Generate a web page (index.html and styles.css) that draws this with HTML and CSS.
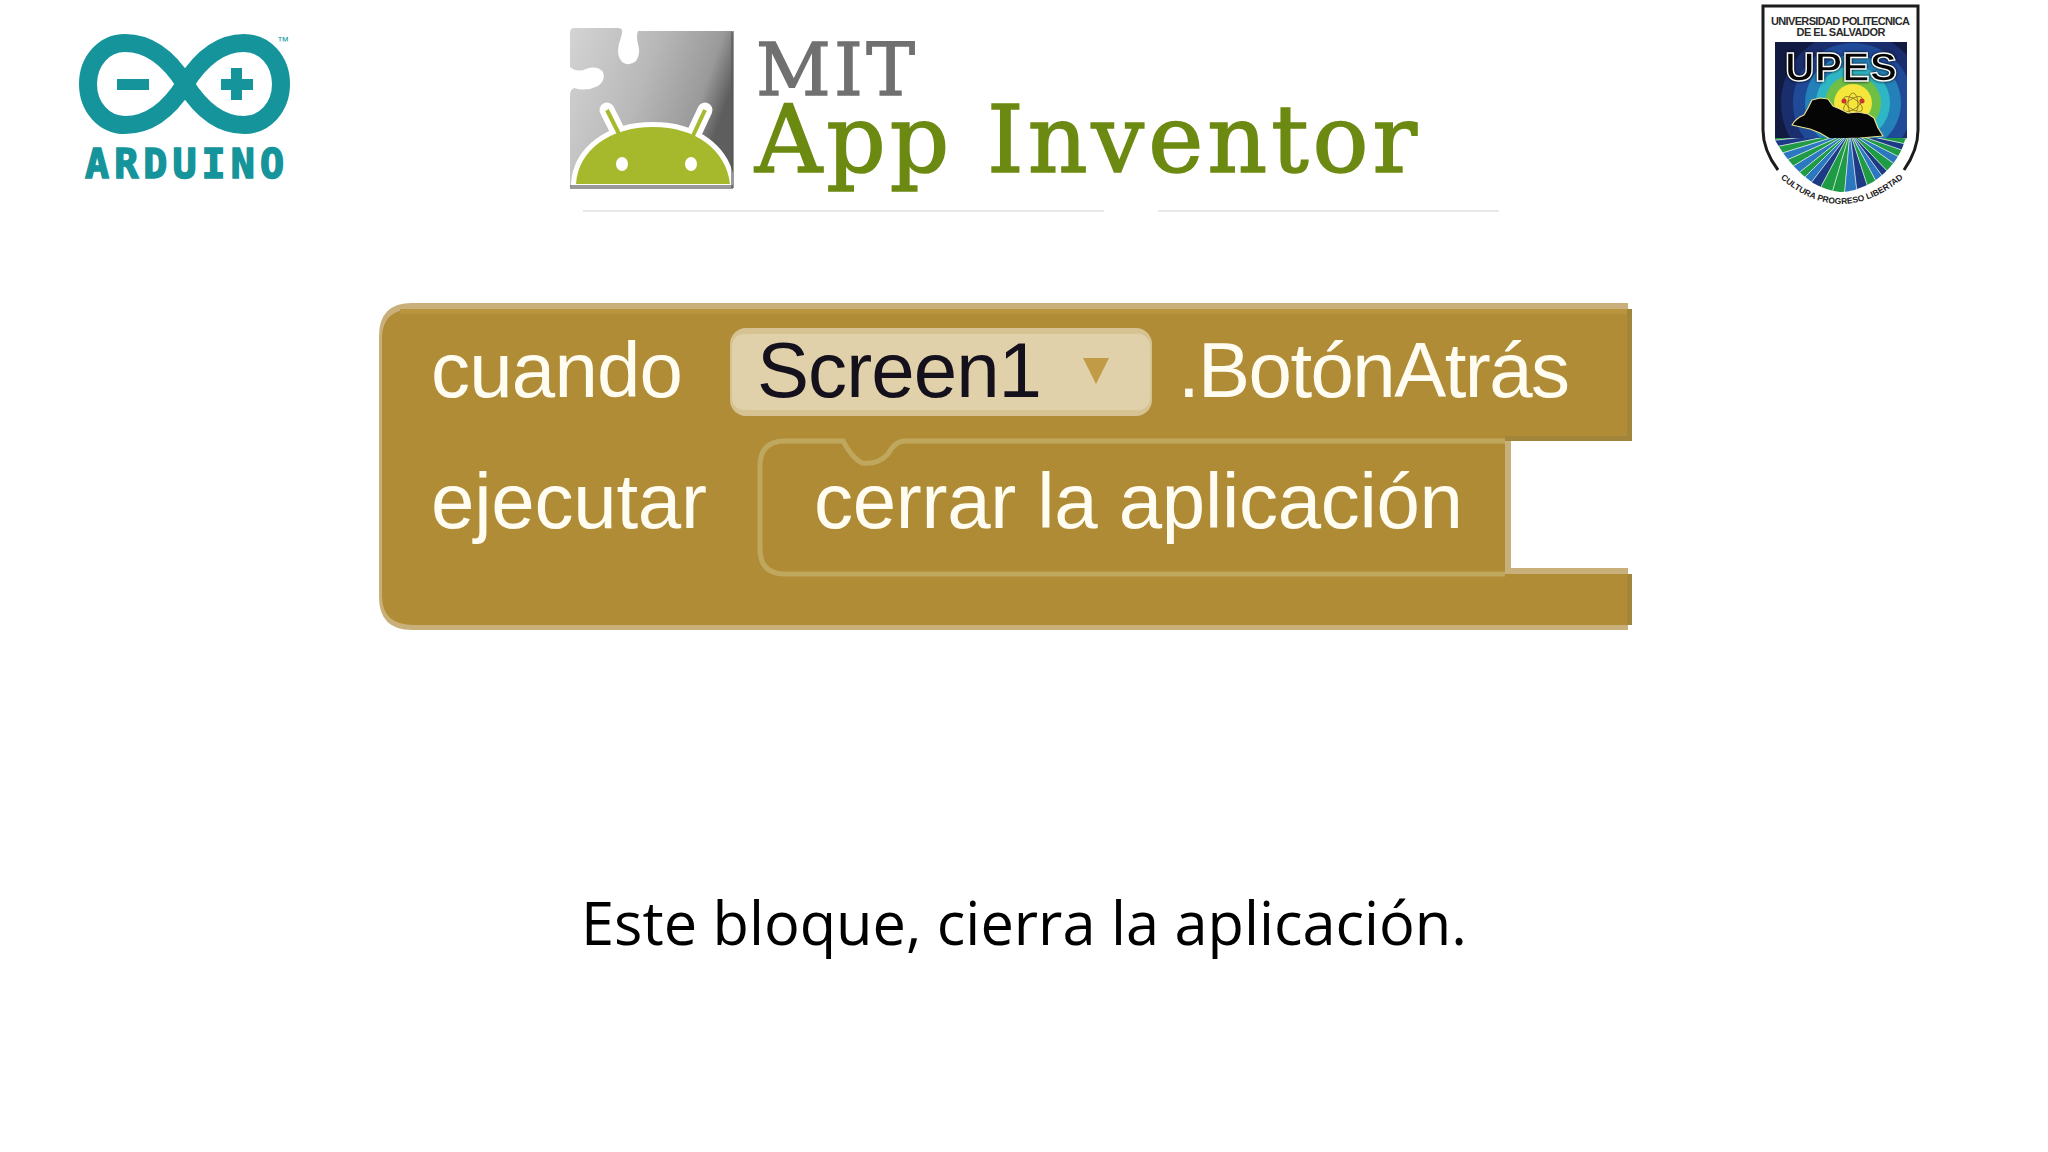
FILE: index.html
```html
<!DOCTYPE html>
<html lang="es">
<head>
    <meta charset="UTF-8">
    <title>Este bloque, cierra la aplicación</title>
    <link rel="stylesheet" href="styles.css">
</head>
<body>
    <div class="slide">
        <div class="logos">
            <!-- arduino -->
            <svg class="logo-arduino" viewBox="40 0 300 210">
                <g class="ard-ring">
                    <path d="M185 84C170 60 150 43 125 43C104 43 88 61 88 84C88 107 104 125 125 125C150 125 170 108 185 84C200 60 220 43 244 43C265 43 281 61 281 84C281 107 265 125 244 125C220 125 200 108 185 84Z"/>
                </g>
                <rect class="ard-fill" x="117" y="79" width="32" height="11"/>
                <rect class="ard-fill" x="221" y="79" width="32" height="11"/>
                <rect class="ard-fill" x="231" y="68" width="11" height="32"/>
                <text class="ard-tm" x="277" y="45">™</text>
                <text class="ard-name" x="85" y="178" textLength="199">ARDUINO</text>
            </svg>

            <!-- app inventor -->
            <svg class="logo-inventor" viewBox="550 0 1000 225">
                <defs>
                    <linearGradient id="puzzle" x1="0" y1="0" x2="1" y2="0.35">
                        <stop offset="0" stop-color="#d4d4d4"/>
                        <stop offset="0.5" stop-color="#b8b8b8"/>
                        <stop offset="0.85" stop-color="#9a9a9a"/>
                        <stop offset="1" stop-color="#5e5e5e"/>
                    </linearGradient>
                    <clipPath id="puzzle-clip">
                        <path d="M574 28H618Q623 28 622 33Q621 38 619 44Q616 55 622 62Q629 67 636 61Q641 54 638 44Q636 36 638 31H730Q733 31 733 34V185Q733 188 730 188H573Q570 188 570 185V95Q570 90 574 88Q586 92 598 86Q606 80 603 72Q597 65 586 69Q577 73 570 67V33Q570 28 574 28Z"/>
                    </clipPath>
                </defs>
                <path class="pz-body" d="M574 28H618Q623 28 622 33Q621 38 619 44Q616 55 622 62Q629 67 636 61Q641 54 638 44Q636 36 638 31H730Q733 31 733 34V185Q733 188 730 188H573Q570 188 570 185V95Q570 90 574 88Q586 92 598 86Q606 80 603 72Q597 65 586 69Q577 73 570 67V33Q570 28 574 28Z"/>
                <g clip-path="url(#puzzle-clip)">
                    <line class="and-halo" x1="607" y1="110" x2="622" y2="140"/>
                    <line class="and-halo" x1="705" y1="110" x2="691" y2="140"/>
                    <path class="and-edge" d="M576 184C578 150 610 127 653 127C696 127 726 150 730 184Z"/>
                    <line class="and-ant" x1="607" y1="110" x2="622" y2="140"/>
                    <line class="and-ant" x1="705" y1="110" x2="691" y2="140"/>
                    <path class="and-head" d="M576 184C578 150 610 127 653 127C696 127 726 150 730 184Z"/>
                    <ellipse class="and-eye" cx="622" cy="164" rx="6" ry="7"/>
                    <ellipse class="and-eye" cx="691" cy="164" rx="6" ry="7"/>
                </g>
                <rect class="pz-shade" x="570" y="185" width="163" height="4"/>
                <rect class="pz-shade" x="731" y="31" width="3" height="157"/>
                <text class="ai-mit" x="756" y="95" textLength="159">MIT</text>
                <text class="ai-name" x="755" y="172" textLength="662">App Inventor</text>
                <line class="ai-rule" x1="583" y1="211" x2="1104" y2="211"/>
                <line class="ai-rule" x1="1158" y1="211" x2="1499" y2="211"/>
            </svg>

            <!-- escudo upes -->
            <svg class="logo-upes" viewBox="0 0 200 215">
                <defs>
                    <clipPath id="rays-clip">
                        <path d="M35 138H167L165 140Q158 165 133 182Q115 192 100 192Q85 190 73 183Q50 167 35 140Z"/>
                    </clipPath>
                    <clipPath id="panel-clip">
                        <rect x="35" y="42" width="132" height="96"/>
                    </clipPath>
                    <path id="motto-arc" d="M38 176Q100 232 166 176"/>
                </defs>
                <path class="up-shield" d="M38 170Q23 150 23 130V6H178V130Q178 150 164 170"/>
                <text class="up-title" x="100.500" y="25" textLength="139">UNIVERSIDAD POLITECNICA</text>
                <text class="up-title" x="101" y="36" textLength="89">DE EL SALVADOR</text>
                <g clip-path="url(#panel-clip)">
                    <rect class="up-navy" x="35" y="42" width="132" height="96"/>
                    <circle class="up-r1" cx="113" cy="103" r="72"/>
                    <circle class="up-r2" cx="113" cy="103" r="60"/>
                    <circle class="up-r3" cx="113" cy="103" r="48"/>
                    <circle class="up-r4" cx="113" cy="103" r="37"/>
                    <circle class="up-r5" cx="113" cy="103" r="28"/>
                    <circle class="up-r6" cx="113" cy="103" r="19"/>
                </g>
                <g class="up-atom">
                    <ellipse cx="113" cy="104" rx="5" ry="11"/>
                    <ellipse cx="113" cy="104" rx="11" ry="5" transform="rotate(35 113 104)"/>
                    <ellipse cx="113" cy="104" rx="11" ry="5" transform="rotate(-35 113 104)"/>
                    <circle cx="104" cy="101" r="2.500"/>
                    <circle cx="122" cy="101" r="2.500"/>
                </g>
                <path class="up-land" d="M52 125Q56 118 64 115L68 108L72 100L80 98L88 99L93 106L100 109L108 113L118 112L128 114L134 118L138 128L143 136L120 138L90 139L80 133L70 129Z"/>
                <text class="up-letters" x="101" y="81" textLength="112">UPES</text>
                <g clip-path="url(#rays-clip)">
                    <polygon class="ray-g" points="110,132 20,136 20,142"/>
                    <polygon class="ray-d" points="110,132 20,142 20,150"/>
                    <polygon class="ray-g" points="110,132 20,150 20,160"/>
                    <polygon class="ray-b" points="110,132 20,160 20,172"/>
                    <polygon class="ray-g" points="110,132 20,172 20,186"/>
                    <polygon class="ray-b" points="110,132 20,186 25,200"/>
                    <polygon class="ray-g" points="110,132 25,200 42,200"/>
                    <polygon class="ray-b" points="110,132 42,200 58,200"/>
                    <polygon class="ray-d" points="110,132 58,200 74,200"/>
                    <polygon class="ray-g" points="110,132 74,200 90,200"/>
                    <polygon class="ray-g" points="110,132 90,200 104,200"/>
                    <polygon class="ray-b" points="110,132 104,200 118,200"/>
                    <polygon class="ray-d" points="110,132 118,200 132,200"/>
                    <polygon class="ray-g" points="110,132 132,200 146,200"/>
                    <polygon class="ray-b" points="110,132 146,200 160,200"/>
                    <polygon class="ray-d" points="110,132 160,200 175,200"/>
                    <polygon class="ray-g" points="110,132 175,200 185,186"/>
                    <polygon class="ray-b" points="110,132 185,186 185,170"/>
                    <polygon class="ray-g" points="110,132 185,170 185,158"/>
                    <polygon class="ray-d" points="110,132 185,158 185,148"/>
                    <polygon class="ray-g" points="110,132 185,148 185,140"/>
                    <polygon class="ray-b" points="110,132 185,140 185,136"/>
                </g>
                <text class="up-motto"><textPath href="#motto-arc" startOffset="50%">CULTURA PROGRESO LIBERTAD</textPath></text>
            </svg>
        </div>

        <!-- bloque de app inventor -->
        <svg class="block" viewBox="360 300 1300 340">
            <path class="blk-edge" d="M412 303H1628V441H1511V568H1628V630H412Q379 630 379 597V336Q379 303 412 303Z"/>
            <path class="blk-body" d="M414 309H1632V441H1505V574H1632V625H414Q382 625 382 596V338Q382 309 414 309Z"/>
            <rect class="blk-band" x="400" y="309" width="1228" height="5"/>
            <rect class="blk-dark-edge" x="1627" y="309" width="5" height="132"/>
            <rect class="blk-dark-edge" x="1505" y="436" width="127" height="5"/>
            <rect class="blk-dark-edge" x="1627" y="574" width="5" height="51"/>
            <path class="blk-socket" d="M1505 441H905Q895 441 888 454Q878 465 862 463Q852 458 843 441H785Q760 441 760 466V549Q760 574 785 574H1505"/>
            <rect class="blk-pill-edge" x="730" y="328" width="422" height="88" rx="16"/>
            <rect class="blk-pill" x="732" y="334" width="418" height="76" rx="12"/>
            <polygon class="blk-arrow" points="1083,358 1109,358 1096,384"/>
            <text class="blk-text" x="431" y="397" textLength="252">cuando</text>
            <text class="blk-text blk-dark" x="757" y="397" textLength="285">Screen1</text>
            <text class="blk-text" x="1178" y="397" textLength="392">.BotónAtrás</text>
            <text class="blk-text" x="431" y="528" textLength="276">ejecutar</text>
            <text class="blk-text" x="814" y="528" textLength="649">cerrar la aplicación</text>
        </svg>

        <p class="caption">Este bloque, cierra la aplicación.</p>
    </div>
</body>
</html>
```

FILE: styles.css
```css
* {
    margin: 0;
    padding: 0;
    box-sizing: border-box;
}

body {
    background: #fff;
    font-family: 'Open Sans', sans-serif;
}

svg {
    display: block;
    flex-shrink: 0;
}

.slide {
    width: 2048px;
    height: 1152px;
    overflow: hidden;
}

.logos {
    display: flex;
    padding-left: 40px;
    height: 225px;
}

.logo-arduino {
    width: 300px;
    height: 210px;
}

.logo-inventor {
    width: 1000px;
    height: 225px;
    margin-left: 210px;
}

.logo-upes {
    width: 200px;
    height: 215px;
    margin-left: 190px;
}

/* arduino */
.ard-ring path {
    fill: none;
    stroke: #15959b;
    stroke-width: 18;
}

.ard-fill {
    fill: #15959b;
}

.ard-tm {
    font: 12px 'Liberation Sans', sans-serif;
    fill: #15959b;
}

.ard-name {
    font: bold 40px 'DejaVu Sans Mono', monospace;
    fill: #15959b;
    stroke: #15959b;
    stroke-width: 1.6;
}

/* app inventor */
.pz-body {
    fill: url(#puzzle);
}

.pz-shade {
    fill: #555;
    opacity: 0.6;
}

.and-halo {
    stroke: #fff;
    stroke-width: 15;
    stroke-linecap: round;
}

.and-edge {
    fill: #fff;
    stroke: #fff;
    stroke-width: 10;
}

.and-ant {
    stroke: #a6b92c;
    stroke-width: 4;
}

.and-head {
    fill: #a6b92c;
}

.and-eye {
    fill: #fff;
}

.ai-mit {
    font: 73px 'DejaVu Serif', serif;
    fill: #707070;
    stroke: #707070;
    stroke-width: 1.4;
}

.ai-name {
    font: 93px 'DejaVu Serif', serif;
    fill: #6c8a12;
    stroke: #6c8a12;
    stroke-width: 1.6;
}

.ai-rule {
    stroke: #e2e2e6;
    stroke-width: 1.5;
}

/* upes */
.up-shield {
    fill: #fff;
    stroke: #1c1c1c;
    stroke-width: 3;
}

.up-title {
    font: bold 11px 'Liberation Sans', sans-serif;
    fill: #2a2a2a;
    text-anchor: middle;
}

.up-navy { fill: #111a40; }
.up-r1 { fill: #1a2d6c; }
.up-r2 { fill: #1f4a98; }
.up-r3 { fill: #2480b8; }
.up-r4 { fill: #2fb6c4; }
.up-r5 { fill: #6fbf45; }
.up-r6 { fill: #f5e63c; }

.up-atom ellipse {
    fill: none;
    stroke: #7a6420;
    stroke-width: 0.7;
}

.up-atom circle {
    fill: #c8372a;
}

.up-land {
    fill: #050505;
    stroke: #eadf8c;
    stroke-width: 1.2;
    stroke-linejoin: round;
}

.up-letters {
    font: bold 41px 'Liberation Sans', sans-serif;
    fill: #050505;
    stroke: #fff;
    stroke-width: 1.4;
    text-anchor: middle;
    filter: drop-shadow(0 0 1.5px #000);
}

.ray-g { fill: #1f9a45; stroke: #fff; stroke-width: 0.5; }
.ray-b { fill: #2b78c0; stroke: #fff; stroke-width: 0.5; }
.ray-d { fill: #1d3a84; stroke: #fff; stroke-width: 0.5; }

.up-motto {
    font: bold 8.5px 'Liberation Sans', sans-serif;
    fill: #222;
    text-anchor: middle;
}

/* bloque */
.block {
    width: 1300px;
    height: 340px;
    margin-top: 75px;
    margin-left: 360px;
}

.blk-edge {
    fill: #c9b07a;
}

.blk-body {
    fill: #b08c36;
}

.blk-band {
    fill: #b8963f;
}

.blk-dark-edge {
    fill: #a0853a;
}

.blk-socket {
    fill: #af8b35;
    stroke: #c0a75e;
    stroke-width: 5;
}

.blk-pill-edge {
    fill: #d6c393;
}

.blk-pill {
    fill: #e0d1ab;
}

.blk-arrow {
    fill: #c19b45;
}

.blk-text {
    font: 78px 'Liberation Sans', sans-serif;
    fill: #fffdf2;
}

.blk-dark {
    fill: #14101c;
}

.caption {
    margin-top: 246px;
    margin-left: 581px;
    font-size: 59.5px;
    line-height: 72px;
    color: #000;
}
```
